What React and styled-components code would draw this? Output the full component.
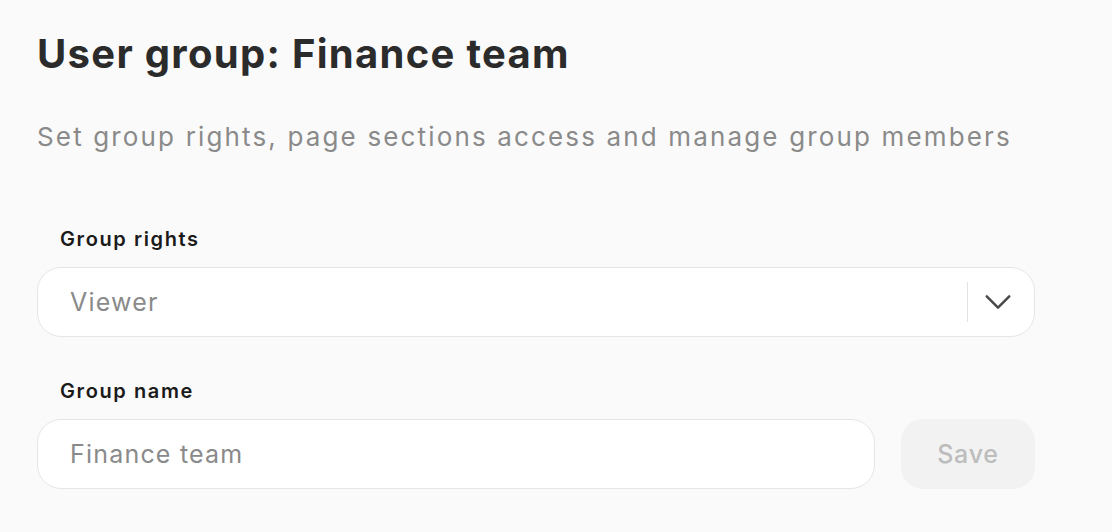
import styled, { createGlobalStyle } from "styled-components";

const GlobalStyle = createGlobalStyle`
  html, body {
    margin: 0;
    background: #fafafa;
    font-family: "Inter", "Noto Sans", sans-serif;
  }
`;

const Page = styled.main`
  padding: 28px 77px 40px 37px;
  width: 998px;
`;

const Title = styled.h1`
  margin: 0;
  font-size: 40px;
  font-weight: 700;
  line-height: 52px;
  color: #2b2b2b;
  letter-spacing: 1.3px;
`;

const Subtitle = styled.p`
  margin: 40px 0 0;
  font-size: 26px;
  line-height: 34px;
  color: #8a8a8a;
  letter-spacing: 2.15px;
  white-space: nowrap;
`;

const Field = styled.div`
  display: flex;
  flex-direction: column;
  gap: 16px;
  margin-top: ${(p) => p.$top}px;
`;

const Label = styled.label`
  padding-left: 23px;
  font-size: 20px;
  font-weight: 600;
  line-height: 24px;
  color: #1a1a1a;
  letter-spacing: 1.6px;
`;

const Box = styled.div`
  flex: 1 1 auto;
  display: flex;
  align-items: center;
  height: 68px;
  padding: 0 ${(p) => (p.$select ? 21 : 32)}px 0 32px;
  background: #fff;
  border: 1px solid #e6e6e6;
  border-radius: 24px;
  font-size: 25px;
  color: #8a8a8a;
  letter-spacing: 1.2px;
`;

const Value = styled.span`
  flex: 1;
`;

const Divider = styled.span`
  width: 1px;
  height: 40px;
  background: #e3e3e3;
  margin-right: 15px;
`;

const Row = styled.div`
  display: flex;
  gap: 26px;
`;

const SaveButton = styled.button`
  width: 134px;
  height: 70px;
  border: none;
  border-radius: 22px;
  background: #f2f2f2;
  color: #bdbdbd;
  font-family: inherit;
  font-size: 25px;
  font-weight: 500;
  letter-spacing: 0.8px;
`;

const Chevron = () => (
  <svg width="30" height="30" viewBox="0 0 24 24" fill="none" stroke="#4a4a4a" strokeWidth="2" strokeLinecap="round" strokeLinejoin="round">
    <path d="M3 7.5l9 9 9-9" />
  </svg>
);

export default function App() {
  return (
    <>
      <GlobalStyle />
      <Page>
        <Title>User group: Finance team</Title>
        <Subtitle>Set group rights, page sections access and manage group members</Subtitle>
        <Field $top={73}>
          <Label>Group rights</Label>
          <Box $select>
            <Value>Viewer</Value>
            <Divider />
            <Chevron />
          </Box>
        </Field>
        <Field $top={42}>
          <Label>Group name</Label>
          <Row>
            <Box>
              <Value>Finance team</Value>
            </Box>
            <SaveButton>Save</SaveButton>
          </Row>
        </Field>
      </Page>
    </>
  );
}
